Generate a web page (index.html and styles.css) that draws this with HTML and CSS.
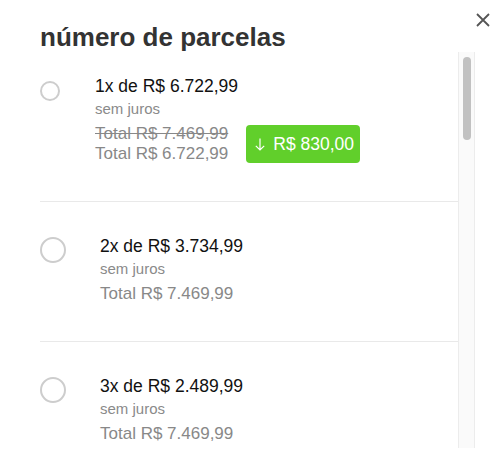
FILE: index.html
```html
<!DOCTYPE html>
<html lang="pt-BR">

<head>
    <meta charset="UTF-8">
    <meta name="viewport" content="width=device-width, initial-scale=1.0">
    <title>número de parcelas</title>
    <link rel="stylesheet" href="styles.css">
</head>

<body>
    <div class="modal">
        <div class="modal-header">
            <h2 class="modal-title">número de parcelas</h2>
            <a href="javascript:;" class="close" aria-label="fechar">
                <svg width="14" height="14" viewBox="0 0 14 14">
                    <path d="M1 1 L13 13 M13 1 L1 13" stroke="#555" stroke-width="1.8" fill="none" />
                </svg>
            </a>
        </div>
        <div class="modal-body">
            <div class="list">
                <label class="option option-first">
                    <span class="radio radio-small"></span>
                    <div class="info">
                        <div class="installment">1x de R$ 6.722,99</div>
                        <div class="interest">sem juros</div>
                        <div class="totals-row">
                            <div class="totals">
                                <div class="total old">Total R$ 7.469,99</div>
                                <div class="total">Total R$ 6.722,99</div>
                            </div>
                            <span class="discount">
                                <svg width="10" height="13" viewBox="0 0 10 13">
                                    <path d="M5 0.5 V12 M0.8 7.8 L5 12 L9.2 7.8" stroke="#fff" stroke-width="1.2" fill="none" />
                                </svg>
                                R$ 830,00
                            </span>
                        </div>
                    </div>
                </label>
                <label class="option">
                    <span class="radio"></span>
                    <div class="info">
                        <div class="installment">2x de R$ 3.734,99</div>
                        <div class="interest">sem juros</div>
                        <div class="total">Total R$ 7.469,99</div>
                    </div>
                </label>
                <label class="option">
                    <span class="radio"></span>
                    <div class="info">
                        <div class="installment">3x de R$ 2.489,99</div>
                        <div class="interest">sem juros</div>
                        <div class="total">Total R$ 7.469,99</div>
                    </div>
                </label>
            </div>
            <div class="scrollbar">
                <div class="thumb"></div>
            </div>
        </div>
    </div>
</body>

</html>
```

FILE: styles.css
```css
body {
    margin: 0;
    background: #fff;
    font-family: "Liberation Sans", Arial, sans-serif;
}

.modal {
    padding-left: 40px;
}

.modal-header {
    display: flex;
    justify-content: space-between;
    align-items: flex-start;
    padding-right: 10px;
}

.modal-title {
    margin: 22px 0 0;
    font-size: 26px;
    line-height: 30px;
    font-weight: bold;
    color: #333;
}

.close {
    display: block;
    width: 14px;
    height: 14px;
    margin-top: 13px;
}

.close svg {
    display: block;
}

.modal-body {
    display: flex;
    height: 396px;
    margin-right: 25px;
}

.list {
    flex: 1;
    overflow: hidden;
}

.option {
    display: flex;
    align-items: flex-start;
    gap: 34px;
    padding: 33px 0 37px;
    border-bottom: 1px solid #e9e9e9;
    cursor: pointer;
}

.option-first {
    padding-top: 23px;
}

.radio {
    flex: none;
    box-sizing: border-box;
    width: 26px;
    height: 26px;
    margin-top: 2px;
    border: 2px solid #cdcdcd;
    border-radius: 50%;
}

.radio-small {
    width: 20px;
    height: 20px;
    margin-top: 6px;
    margin-right: 1px;
}

.installment {
    font-size: 17.5px;
    line-height: 22px;
    color: #111;
}

.interest {
    font-size: 15px;
    line-height: 23px;
    color: #8a8a8a;
    margin-bottom: 4px;
}

.total {
    font-size: 17px;
    line-height: 20px;
    color: #888;
}

.total.old {
    text-decoration: line-through;
}

.totals-row {
    display: flex;
    align-items: center;
    gap: 18px;
}

.discount {
    display: flex;
    align-items: center;
    gap: 8px;
    height: 38px;
    padding: 0 6px 0 9px;
    border-radius: 4px;
    background: #61cf2b;
    color: #fff;
    font-size: 17.5px;
}

.scrollbar {
    flex: none;
    box-sizing: border-box;
    width: 17px;
    padding: 5px 3px 0 4px;
    border-left: 1px solid #ececec;
    border-right: 1px solid #ececec;
    background: #fafafa;
}

.thumb {
    height: 83px;
    border-radius: 4px;
    background: #c1c1c1;
}
```
